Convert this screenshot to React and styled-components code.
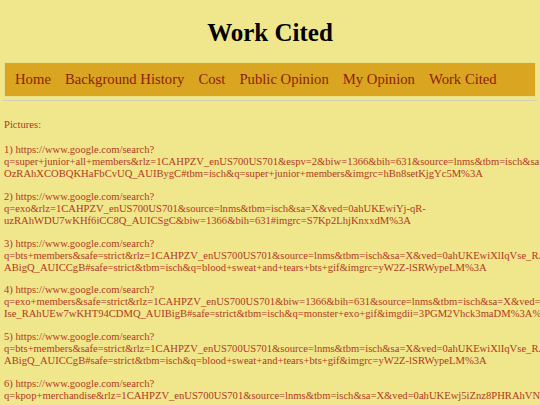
import React from "react";
import styled, { createGlobalStyle } from "styled-components";

const Global = createGlobalStyle`
  html, body {
    margin: 0;
    padding: 0;
    overflow: hidden;
    background: #f0e68c;
  }
  body {
    font-family: "Liberation Serif", "Times New Roman", serif;
  }
`;

const Page = styled.div`
  padding: 18px 3px 0;
  overflow: hidden;
  width: 540px;
  box-sizing: border-box;
`;

const Title = styled.h1`
  margin: 0;
  text-align: center;
  font-size: 25px;
  line-height: 29px;
  font-weight: bold;
  color: #000;
`;

const Nav = styled.nav`
  margin: 16px 2px 0;
  height: 33px;
  background: #daa520;
  display: flex;
  align-items: center;
  gap: 14px;
  padding: 0 10px;
  box-shadow: 0 0 1px rgba(0, 0, 0, 0.15);
`;

const NavLink = styled.a`
  color: #8b1f0b;
  text-decoration: none;
  font-size: 14.7px;
  line-height: 17px;
  white-space: nowrap;
`;

const Rule = styled.hr`
  margin: 4px 0 0;
  border: none;
  border-top: 1px solid #d2cfb4;
  height: 0;
`;

const Content = styled.div`
  padding: 18px 0 0 1px;
  color: #b0391f;
  font-size: 10.6px;
  line-height: 12px;
`;

const Heading = styled.p`
  margin: 0 0 13px;
`;

const Entry = styled.p`
  margin: 0 0 10.8px;
`;

const Line = styled.span`
  display: block;
  white-space: nowrap;
`;

const links = [
  "Home",
  "Background History",
  "Cost",
  "Public Opinion",
  "My Opinion",
  "Work Cited",
];

const entries = [
  [
    "1) https://www.google.com/search?",
    "q=super+junior+all+members&rlz=1CAHPZV_enUS700US701&espv=2&biw=1366&bih=631&source=lnms&tbm=isch&sa=X&ved=0ahUKEwjR8aGz8PHRAhUy-",
    "OzRAhXCOBQKHaFbCvUQ_AUIBygC#tbm=isch&q=super+junior+members&imgrc=hBn8setKjgYc5M%3A",
  ],
  [
    "2) https://www.google.com/search?",
    "q=exo&rlz=1CAHPZV_enUS700US701&source=lnms&tbm=isch&sa=X&ved=0ahUKEwiYj-qR-",
    "uzRAhWDU7wKHf6iCC8Q_AUICSgC&biw=1366&bih=631#imgrc=S7Kp2LhjKnxxdM%3A",
  ],
  [
    "3) https://www.google.com/search?",
    "q=bts+members&safe=strict&rlz=1CAHPZV_enUS700US701&source=lnms&tbm=isch&sa=X&ved=0ahUKEwiXlIqVse_RAhXD-",
    "ABigQ_AUICCgB#safe=strict&tbm=isch&q=blood+sweat+and+tears+bts+gif&imgrc=yW2Z-lSRWypeLM%3A",
  ],
  [
    "4) https://www.google.com/search?",
    "q=exo+members&safe=strict&rlz=1CAHPZV_enUS700US701&biw=1366&bih=631&source=lnms&tbm=isch&sa=X&ved=0ahUKEwjT5oq-",
    "Ise_RAhUEw7wKHT94CDMQ_AUIBigB#safe=strict&tbm=isch&q=monster+exo+gif&imgdii=3PGM2Vhck3maDM%3A%3BqZ5lM%3A",
  ],
  [
    "5) https://www.google.com/search?",
    "q=bts+members&safe=strict&rlz=1CAHPZV_enUS700US701&source=lnms&tbm=isch&sa=X&ved=0ahUKEwiXlIqVse_RAhXD-",
    "ABigQ_AUICCgB#safe=strict&tbm=isch&q=blood+sweat+and+tears+bts+gif&imgrc=yW2Z-lSRWypeLM%3A",
  ],
  [
    "6) https://www.google.com/search?",
    "q=kpop+merchandise&rlz=1CAHPZV_enUS700US701&source=lnms&tbm=isch&sa=X&ved=0ahUKEwj5iZnz8PHRAhVNC",
  ],
];

export default function App() {
  return (
    <>
      <Global />
      <Page>
        <Title>Work Cited</Title>
        <Nav>
          {links.map((l) => (
            <NavLink key={l} href="#">
              {l}
            </NavLink>
          ))}
        </Nav>
        <Rule />
        <Content>
          <Heading>Pictures:</Heading>
          {entries.map((lines, i) => (
            <Entry key={i}>
              {lines.map((t, j) => (
                <Line key={j}>{t}</Line>
              ))}
            </Entry>
          ))}
        </Content>
      </Page>
    </>
  );
}
